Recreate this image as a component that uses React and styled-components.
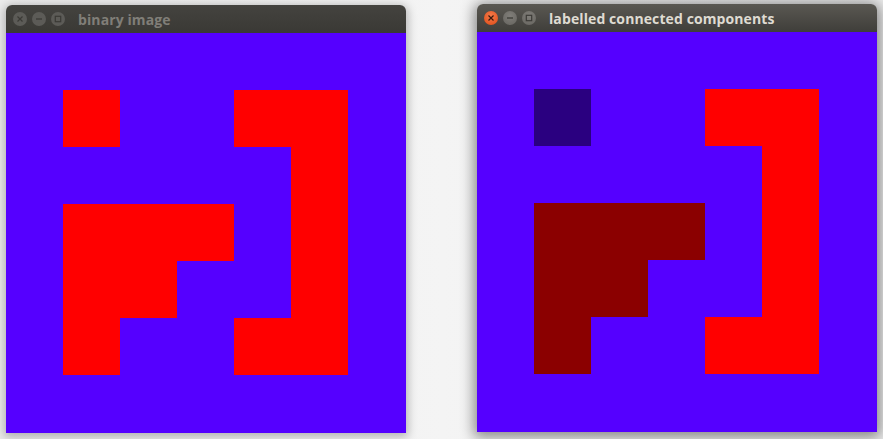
import React from "react";
import styled, { createGlobalStyle } from "styled-components";

const Global = createGlobalStyle`
  html, body { margin: 0; padding: 0; }
  body {
    width: 883px; height: 439px; overflow: hidden;
    background: linear-gradient(90deg, #ececec 0%, #f4f4f4 50%, #ececec 100%);
    font-family: "Open Sans", "DejaVu Sans", sans-serif;
  }
`;

const Desktop = styled.div`
  display: flex;
  align-items: flex-start;
  gap: 71px;
  padding-left: 6px;
  height: 439px;
  box-sizing: border-box;
`;

const Window = styled.div`
  width: 400px;
  margin-top: ${(p) => p.$top}px;
  display: flex;
  flex-direction: column;
  border-radius: 6px 6px 0 0;
  box-shadow: ${(p) =>
    p.$focused
      ? "0 2px 14px 3px rgba(0,0,0,0.45)"
      : "0 2px 10px 2px rgba(0,0,0,0.26)"};
`;

const TitleBar = styled.div`
  height: ${(p) => p.$h}px;
  display: flex;
  align-items: center;
  padding-left: 7px;
  border-radius: 6px 6px 0 0;
  background: ${(p) =>
    p.$focused
      ? "linear-gradient(180deg, #5a5852 0%, #3f3e3a 100%)"
      : "linear-gradient(180deg, #44433f 0%, #3a3935 100%)"};
`;

const Buttons = styled.div`
  display: flex;
  gap: 5px;
  margin-right: 13px;
`;

const Btn = styled.div`
  width: 14px;
  height: 14px;
  border-radius: 50%;
  display: flex;
  align-items: center;
  justify-content: center;
  background: ${(p) =>
    p.$kind === "close-active"
      ? "radial-gradient(circle at 50% 35%, #f47a4a, #df4b16)"
      : p.$focused
      ? "radial-gradient(circle at 50% 35%, #807e79, #65635e)"
      : "#5c5b57"};
  svg { display: block; }
`;

const Title = styled.div`
  font-weight: 700;
  font-size: 14px;
  letter-spacing: 0.1px;
  color: ${(p) => (p.$focused ? "#dfdbd2" : "#807e78")};
  white-space: nowrap;
`;

const Canvas = styled.div`
  width: 400px;
  height: 400px;
  display: grid;
  grid-template-columns: repeat(7, 57px);
  grid-template-rows: repeat(7, 57px);
  background: #5500ff;
`;

const Cell = styled.div`
  background: ${(p) => p.$c};
`;

const BLUE = "#5500ff";
const RED = "#ff0000";
const DARK_RED = "#8b0000";
const DARK_BLUE = "#2a0080";

// 0 bg, 1 small square, 2 L shape, 3 J shape
const MAP = [
  "0000000",
  "0100330",
  "0000030",
  "0222030",
  "0220030",
  "0200330",
  "0000000",
];

const binaryColors = { 0: BLUE, 1: RED, 2: RED, 3: RED };
const labelColors = { 0: BLUE, 1: DARK_BLUE, 2: DARK_RED, 3: RED };

const glyphColor = (focused, close) =>
  close && focused ? "#3a1a0e" : focused ? "#3c3b37" : "#3b3a36";

const CloseIcon = ({ color }) => (
  <svg width="8" height="8" viewBox="0 0 8 8">
    <path d="M1.5 1.5L6.5 6.5M6.5 1.5L1.5 6.5" stroke={color} strokeWidth="1.2" />
  </svg>
);
const MinIcon = ({ color }) => (
  <svg width="8" height="8" viewBox="0 0 8 8">
    <path d="M1 4H7" stroke={color} strokeWidth="1.3" />
  </svg>
);
const MaxIcon = ({ color }) => (
  <svg width="8" height="8" viewBox="0 0 8 8">
    <rect x="1.3" y="1.3" width="5.4" height="5.4" fill="none" stroke={color} strokeWidth="1.2" />
  </svg>
);

function Win({ title, focused, top, titleH, colors }) {
  return (
    <Window $top={top} $focused={focused}>
      <TitleBar $h={titleH} $focused={focused}>
        <Buttons>
          <Btn $kind={focused ? "close-active" : "close"} $focused={focused}>
            <CloseIcon color={glyphColor(focused, true)} />
          </Btn>
          <Btn $focused={focused}>
            <MinIcon color={glyphColor(focused)} />
          </Btn>
          <Btn $focused={focused}>
            <MaxIcon color={glyphColor(focused)} />
          </Btn>
        </Buttons>
        <Title $focused={focused}>{title}</Title>
      </TitleBar>
      <Canvas>
        {MAP.flatMap((row, r) =>
          row.split("").map((v, c) => <Cell key={`${r}-${c}`} $c={colors[v]} />)
        )}
      </Canvas>
    </Window>
  );
}

export default function App() {
  return (
    <>
      <Global />
      <Desktop>
        <Win title="binary image" focused={false} top={5} titleH={28} colors={binaryColors} />
        <Win title="labelled connected components" focused top={4} titleH={28} colors={labelColors} />
      </Desktop>
    </>
  );
}
